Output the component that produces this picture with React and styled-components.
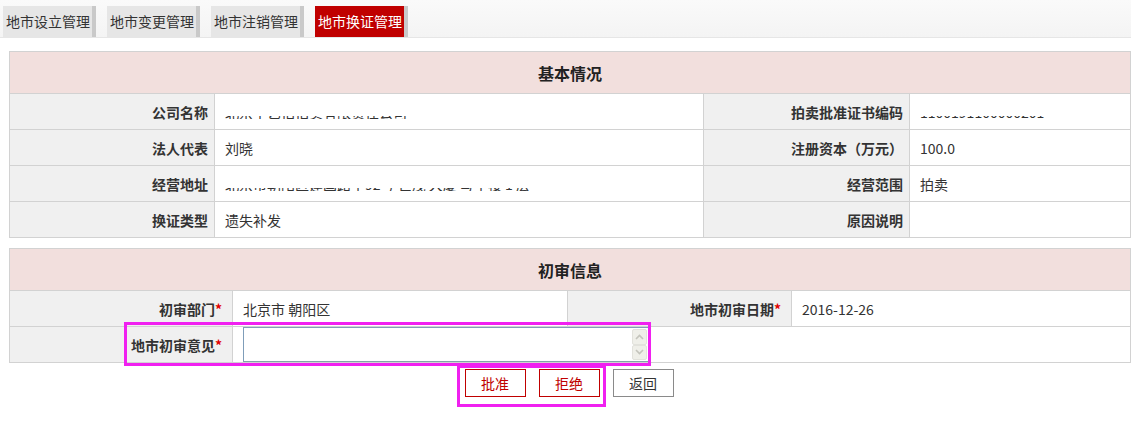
import React from "react";
import styled, { createGlobalStyle } from "styled-components";

const Global = createGlobalStyle`
  html, body { margin: 0; padding: 0; background: #fff; }
  body { font-family: "Noto Sans CJK SC", "Noto Sans", sans-serif; font-size: 14px; color: #333; }
`;

const Page = styled.div`
  position: relative;
  width: 1131px;
  height: 422px;
`;

const TabBar = styled.div`
  display: flex;
  gap: 11px;
  height: 31px;
  padding: 6px 0 0 3px;
  background: linear-gradient(#fafafa, #f4f4f4);
  border-bottom: 1px solid #e6e6e6;
`;

const Tab = styled.div`
  display: flex;
  align-items: center;
  height: 31px;
  padding: 0 2px 0 3px;
  background: ${(p) => (p.$active ? "#c00000" : "#e6e6e6")};
  color: ${(p) => (p.$active ? "#fff" : "#333")};
  border-right: 4px solid #c9c9c9;
  font-size: 14px;
  line-height: 31px;
  white-space: nowrap;
`;

const Content = styled.div`
  padding: 13px 2px 0 9px;
`;

const Table = styled.table`
  width: 1121px;
  border-collapse: collapse;
  table-layout: fixed;
  margin-bottom: ${(p) => p.$mb || 0}px;
  border: 1px solid #d2d2d2;
`;

const HeadCell = styled.th`
  height: 41px;
  padding: 0;
  background: #f2dfdd;
  border: 1px solid #d2d2d2;
  font-size: 16px;
  font-weight: bold;
  color: #222;
  text-align: center;
`;

const Label = styled.td`
  height: 35px;
  padding: 0 ${(p) => (p.$pr ? p.$pr : 6)}px 0 0;
  background: #f0f0f0;
  border: 1px solid #d2d2d2;
  text-align: right;
  font-weight: bold;
  color: #333;
  white-space: nowrap;
  vertical-align: middle;
`;

const Value = styled.td`
  height: 35px;
  padding: 0 0 0 10px;
  background: #fff;
  border: 1px solid #d2d2d2;
  color: #333;
  white-space: nowrap;
  vertical-align: middle;
`;

const Star = styled.span`
  color: #e00000;
`;

const Clip = styled.span`
  display: inline-block;
  height: 3px;
  overflow: hidden;
  vertical-align: middle;
  margin-top: 8px;
`;

const ClipInner = styled.span`
  display: block;
  line-height: 16px;
  margin-top: -12px;
  white-space: pre;
`;

const TextWrap = styled.div`
  display: flex;
  width: 404px;
  height: 33px;
  border: 1px solid #7f9db9;
  border-bottom-color: #7fa5a8;
  background: #fff;
`;

const TextArea = styled.textarea`
  flex: 1;
  border: none;
  outline: none;
  resize: none;
  padding: 2px;
  font: inherit;
  overflow: hidden;
`;

const ScrollBar = styled.div`
  display: flex;
  flex-direction: column;
  justify-content: space-between;
  width: 15px;
  padding: 1px 1px 1px 0;
`;

const ScrollBtn = styled.div`
  height: 15px;
  background: #efefe9;
  border: 1px solid #e2e2dc;
  border-radius: 2px;
  display: flex;
  align-items: center;
  justify-content: center;
`;

const Buttons = styled.div`
  display: flex;
  justify-content: center;
  gap: 13px;
  margin-top: 6px;
`;

const Button = styled.button`
  width: 61px;
  height: 28px;
  background: #fff;
  border: 1px solid ${(p) => (p.$red ? "#c00000" : "#8a8a8a")};
  color: ${(p) => (p.$red ? "#c00000" : "#333")};
  font-family: inherit;
  font-size: 14px;
  padding: 0;
  cursor: pointer;
`;

const Highlight = styled.div`
  position: absolute;
  border: 3px solid #f020f0;
  pointer-events: none;
`;

const Blurred = ({ text }) => (
  <Clip>
    <ClipInner>{text}</ClipInner>
  </Clip>
);

const Arrow = ({ up }) => (
  <svg width="9" height="6" viewBox="0 0 9 6">
    <path
      d={up ? "M1 5 L4.5 1.5 L8 5" : "M1 1 L4.5 4.5 L8 1"}
      fill="none"
      stroke="#c4c4bc"
      strokeWidth="1.6"
    />
  </svg>
);

export default function App() {
  return (
    <>
      <Global />
      <Page>
        <TabBar>
          <Tab>地市设立管理</Tab>
          <Tab>地市变更管理</Tab>
          <Tab>地市注销管理</Tab>
          <Tab $active>地市换证管理</Tab>
        </TabBar>
        <Content>
          <Table $mb={10}>
            <colgroup>
              <col style={{ width: 205 }} />
              <col style={{ width: 489 }} />
              <col style={{ width: 206 }} />
              <col style={{ width: 221 }} />
            </colgroup>
            <thead>
              <tr>
                <HeadCell colSpan={4}>基本情况</HeadCell>
              </tr>
            </thead>
            <tbody>
              <tr>
                <Label>公司名称</Label>
                <Value>
                  <Blurred text="北京华艺拍拍卖有限责任公司" />
                </Value>
                <Label>拍卖批准证书编码</Label>
                <Value>
                  <Blurred text="1100191100000201" />
                </Value>
              </tr>
              <tr>
                <Label>法人代表</Label>
                <Value>刘晓</Value>
                <Label>注册资本（万元）</Label>
                <Value>100.0</Value>
              </tr>
              <tr>
                <Label>经营地址</Label>
                <Value>
                  <Blurred text="北京市朝阳区建国路甲92号 世茂 大厦 写字楼 1 层" />
                </Value>
                <Label>经营范围</Label>
                <Value>拍卖</Value>
              </tr>
              <tr>
                <Label>换证类型</Label>
                <Value>遗失补发</Value>
                <Label>原因说明</Label>
                <Value></Value>
              </tr>
            </tbody>
          </Table>
          <Table>
            <colgroup>
              <col style={{ width: 223 }} />
              <col style={{ width: 335 }} />
              <col style={{ width: 224 }} />
              <col style={{ width: 339 }} />
            </colgroup>
            <thead>
              <tr>
                <HeadCell colSpan={4}>初审信息</HeadCell>
              </tr>
            </thead>
            <tbody>
              <tr>
                <Label $pr={10}>
                  初审部门<Star>*</Star>
                </Label>
                <Value>北京市 朝阳区</Value>
                <Label $pr={10}>
                  地市初审日期<Star>*</Star>
                </Label>
                <Value>2016-12-26</Value>
              </tr>
              <tr>
                <Label $pr={10}>
                  地市初审意见<Star>*</Star>
                </Label>
                <Value colSpan={3}>
                  <TextWrap>
                    <TextArea />
                    <ScrollBar>
                      <ScrollBtn>
                        <Arrow up />
                      </ScrollBtn>
                      <ScrollBtn>
                        <Arrow />
                      </ScrollBtn>
                    </ScrollBar>
                  </TextWrap>
                </Value>
              </tr>
            </tbody>
          </Table>
          <Buttons>
            <Button $red>批准</Button>
            <Button $red>拒绝</Button>
            <Button>返回</Button>
          </Buttons>
        </Content>
        <Highlight style={{ left: 124, top: 322, width: 521, height: 38 }} />
        <Highlight style={{ left: 457, top: 365, width: 143, height: 36 }} />
      </Page>
    </>
  );
}
